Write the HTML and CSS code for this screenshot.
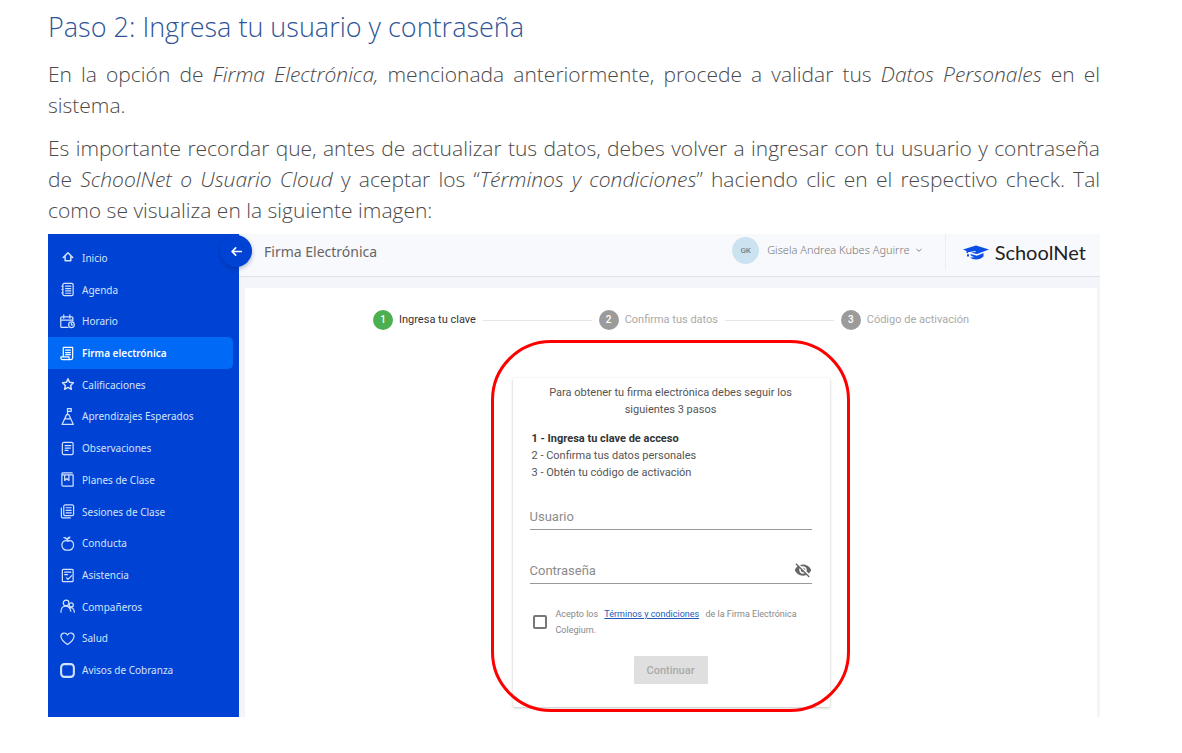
FILE: index.html
```html
<!DOCTYPE html>
<html lang="es">
<head>
<meta charset="utf-8">
<meta name="viewport" content="width=device-width, initial-scale=1">
<title>Paso 2: Ingresa tu usuario y contraseña</title>
<link rel="stylesheet" href="styles.css">
</head>
<body>
<article class="doc">
  <h1 class="doc-title">Paso 2: Ingresa tu usuario y contraseña</h1>
  <p class="doc-text">En la opción de <em>Firma Electrónica,</em> mencionada anteriormente, procede a validar tus <em>Datos Personales</em> en el sistema.</p>
  <p class="doc-text">Es importante recordar que, antes de actualizar tus datos, debes volver a ingresar con tu usuario y contraseña de <em>SchoolNet o Usuario Cloud</em> y aceptar los “<em>Términos y condiciones</em>” haciendo clic en el respectivo check. Tal como se visualiza en la siguiente imagen:</p>

  <div class="app">
    <aside class="sidebar">
      <button class="collapse" type="button" aria-label="Contraer menú">
        <svg class="icon" viewBox="0 0 16 16"><path d="M14 8H3M7 3.500 2.500 8 7 12.500" stroke-width="2"/></svg>
      </button>
      <nav class="nav">
        <a class="nav-item" href="#"><svg class="icon" viewBox="0 0 16 16"><path d="M3.500 8 8.500 3l5 5M5.500 7v4.500h6V7" stroke-width="1.600"/></svg>Inicio</a>
        <a class="nav-item" href="#"><svg class="icon" viewBox="0 0 16 16"><rect x="3" y="1.500" width="11" height="13" rx="1.500"/><path d="M6 4.500h5.500M6 7h5.500M6 9.500h5.500M6 12h5.500M2 4.500h1M2 8h1M2 11.500h1"/></svg>Agenda</a>
        <a class="nav-item" href="#"><svg class="icon" viewBox="0 0 16 16"><path d="M8.500 14.300H2Q.8 14.300.8 13V4Q.8 3 2 3h10.500q1.200 0 1.200 1v3.500M.8 6.500h12.700M4 1v3.500M10.500 1v3.500"/><circle cx="12.200" cy="11.500" r="3"/><path d="M12.200 10v1.700h1.200"/></svg>Horario</a>
        <a class="nav-item active" href="#" aria-current="page"><svg class="icon" viewBox="0 0 16 16"><path d="M3.500 11V1.500h10v11q0 2-2 2h-9q-1.500 0-1.500-2V11.500h8.500v1q0 2 2 2M6 4.500h5M6 7h5M6 9.200h5"/></svg>Firma electrónica</a>
        <a class="nav-item" href="#"><svg class="icon" viewBox="0 0 16 16"><path d="m8.500 2 1.700 3.700 4.100.5-3 2.800.8 4.100-3.600-2-3.600 2 .8-4.100-3-2.800 4.100-.5z" stroke-width="1.600"/></svg>Calificaciones</a>
        <a class="nav-item" href="#"><svg class="icon tall" viewBox="0 0 16 20"><path d="M8 7V1.500h4v3H8M2.200 18.500 7 8h2.500l4.700 10.500zM5.200 12.500h6"/></svg>Aprendizajes Esperados</a>
        <a class="nav-item" href="#"><svg class="icon" viewBox="0 0 16 16"><rect x="2.500" y="1.500" width="11.500" height="13" rx="1.500"/><path d="M5.500 5h6M5.500 7.500h5.500M5.500 10h3"/></svg>Observaciones</a>
        <a class="nav-item" href="#"><svg class="icon" viewBox="0 0 16 16"><path d="M2 3V13.500Q2 15 3.500 15H14V3H3Q2 3 2 2t1-1h10M5 3v6l2.200-2L9.500 9V3"/></svg>Planes de Clase</a>
        <a class="nav-item" href="#"><svg class="icon" viewBox="0 0 16 16"><rect x="4" y="1" width="10.500" height="11.500" rx="1.500"/><path d="M6.500 4h5.500M6.500 6.700h5.500M6.500 9.500h5.500M1.500 4.500v8.500q0 1.800 1.500 1.800h8"/></svg>Sesiones de Clase</a>
        <a class="nav-item" href="#"><svg class="icon" viewBox="0 0 16 16"><path d="M8.500 5.500C5 4 2 6 2 9.500S4.500 15 6.500 15h3.500c2 0 4.500-2 4.500-5.500S12 4 8.500 5.500zM8.500 5 7 2.500"/><path fill="currentColor" d="M4 1.500q2.500-.8 3.500 1.500 1-2.500 3.500-2-.5 2.500-3 2.500Q5 3.500 4 1.500z" stroke-width=".5"/></svg>Conducta</a>
        <a class="nav-item" href="#"><svg class="icon" viewBox="0 0 16 16"><rect x="2.500" y="1.500" width="11.500" height="13" rx="1"/><path d="M5 4.500h6.500M5 7h3M7 10.500l1.500 1.700 4-4"/></svg>Asistencia</a>
        <a class="nav-item" href="#"><svg class="icon" viewBox="0 0 16 16"><circle cx="6.500" cy="4.200" r="3"/><path d="M1 14c0-4.200 2-6.500 5-6.500s5 2.500 5.500 5.500"/><circle cx="12" cy="6.300" r="2.200"/><path d="M10 9.500c3-1 5 .8 5.300 4.500"/></svg>Compañeros</a>
        <a class="nav-item" href="#"><svg class="icon" viewBox="0 0 16 16"><path d="M8 14.500C3.500 11.500 1 8.800 1 5.700 1 1.800 6 .8 8 4.300c2-3.500 7-2.500 7 1.400 0 3.100-2.500 5.800-7 8.800z"/></svg>Salud</a>
        <a class="nav-item" href="#"><svg class="icon" viewBox="0 0 16 16"><rect x="1.200" y="1.200" width="13.600" height="13.600" rx="3.500" stroke-width="2.200"/></svg>Avisos de Cobranza</a>
      </nav>
    </aside>

    <div class="main">
      <header class="topbar">
        <h2 class="topbar-title">Firma Electrónica</h2>
        <button class="user" type="button">
          <span class="avatar">GK</span>
          Gisela Andrea Kubes Aguirre
          <svg class="chevron" viewBox="0 0 8 8"><path d="m1.500 3 2.500 2.300L6.500 3"/></svg>
        </button>
        <div class="brand">
          <svg class="brand-logo" viewBox="0 0 26 15"><path fill="#0b4fe8" d="M0 4.500 13 .5l13 4L14 9 8 7.800l5-1-.5-.8L5 7.200v1L3.500 8V6zM4 9.200h2v2.300H4zM7.500 9l6.500 1.700L20.500 8v3.500q-3 3-7.500 3-4 0-6-2l4.500-.2q-3-.8-4-2.300z"/></svg>
          <span>SchoolNet</span>
        </div>
      </header>

      <main class="panel">
        <ol class="steps">
          <li class="step current"><span class="dot">1</span>Ingresa tu clave</li>
          <li class="step-line" role="presentation"></li>
          <li class="step"><span class="dot">2</span>Confirma tus datos</li>
          <li class="step-line" role="presentation"></li>
          <li class="step"><span class="dot">3</span>Código de activación</li>
        </ol>

        <form class="card">
          <p class="card-intro">Para obtener tu firma electrónica debes seguir los siguientes 3 pasos</p>
          <div class="card-list">
            <strong>1 - Ingresa tu clave de acceso</strong>
            <span>2 - Confirma tus datos personales</span>
            <span>3 - Obtén tu código de activación</span>
          </div>
          <div class="fields">
            <div class="field">
              <input type="text" placeholder="Usuario" aria-label="Usuario">
            </div>
            <div class="field">
              <input type="password" placeholder="Contraseña" aria-label="Contraseña">
              <button class="eye" type="button" aria-label="Mostrar contraseña">
                <svg viewBox="0 0 24 24"><path fill="#666" d="M12 7c2.760 0 5 2.240 5 5 0 .65-.13 1.260-.36 1.830l2.920 2.920c1.510-1.260 2.700-2.890 3.430-4.750-1.730-4.390-6-7.500-11-7.500-1.400 0-2.740.25-3.980.7l2.160 2.160C10.740 7.130 11.350 7 12 7zM2 4.270l2.280 2.280.46.46C3.080 8.300 1.780 10.020 1 12c1.730 4.390 6 7.500 11 7.500 1.550 0 3.030-.3 4.380-.84l.42.42L19.730 22 21 20.730 3.270 3 2 4.270zM7.530 9.800l1.550 1.550c-.05.21-.08.43-.08.65 0 1.660 1.340 3 3 3 .22 0 .44-.03.65-.08l1.550 1.550c-.67.33-1.410.53-2.200.53-2.760 0-5-2.240-5-5 0-.79.2-1.530.53-2.200zm4.310-.78 3.150 3.150.02-.16c0-1.660-1.340-3-3-3l-.17.010z"/></svg>
              </button>
            </div>
          </div>
          <div class="terms">
            <input type="checkbox" id="accept">
            <label for="accept">Acepto los <a href="#">Términos y condiciones</a> de la Firma Electrónica Colegium.</label>
          </div>
          <button class="submit" type="submit" disabled>Continuar</button>
          <div class="highlight" aria-hidden="true"></div>
        </form>
      </main>
    </div>
  </div>
</article>
</body>
</html>
```
FILE: styles.css
```css
* {
  box-sizing: border-box;
}

body {
  margin: 0;
  background: #fff;
  font-family: Roboto, "Liberation Sans", sans-serif;
}

button,
input {
  font: inherit;
}

.doc {
  padding: 8px 82px 36px 48px;
}

.doc-title {
  margin: 0 0 13px;
  color: #2f5597;
  font: 300 27px/38px "Open Sans", sans-serif;
}

.doc-text {
  margin: 0 0 12px;
  color: #4a4a4a;
  font: 300 21px/31px "Open Sans", sans-serif;
  text-align: justify;
}

.doc-text:last-of-type {
  margin-bottom: 8px;
}

.app {
  display: flex;
  min-height: 483px;
  background: #f4f5fa;
}

/* Sidebar */
.sidebar {
  position: relative;
  display: flex;
  flex: 0 0 191px;
  padding: 8px 6px 31px 0;
  background: #0043d4;
}

.collapse {
  position: absolute;
  top: 1px;
  right: -13px;
  display: grid;
  place-items: center;
  width: 32px;
  height: 32px;
  padding: 0;
  border: 0;
  border-radius: 50%;
  background: #0043d4;
  color: #fff;
  box-shadow: 0 2px 4px rgba(0, 20, 90, 0.3);
}

.nav {
  display: flex;
  flex: 1;
  flex-direction: column;
}

.nav-item {
  display: flex;
  flex: 1;
  align-items: center;
  gap: 7px;
  padding-left: 12px;
  border-radius: 0 5px 5px 0;
  color: #d3e2fb;
  font: 400 10px/16px "Noto Sans", sans-serif;
  text-decoration: none;
}

.nav-item.active {
  background: #0069f5;
  color: #fff;
  font-weight: 600;
}

.icon {
  flex: none;
  width: 15px;
  height: 15px;
  fill: none;
  stroke: currentColor;
  stroke-width: 1.3;
  stroke-linecap: round;
  stroke-linejoin: round;
}

.icon.tall {
  height: 19px;
}

.collapse .icon {
  width: 13px;
  height: 13px;
}

/* Main area */
.main {
  display: flex;
  flex: 1;
  flex-direction: column;
  min-width: 0;
}

.topbar {
  display: flex;
  align-items: center;
  height: 43px;
  padding: 0 14px 0 25px;
  border-bottom: 1px solid #dfe1e8;
  background: #f8f9fc;
}

.topbar-title {
  flex: 1;
  margin: 0;
  padding-bottom: 6px;
  color: #666;
  font: 400 14px/20px "Noto Sans", sans-serif;
}

.user {
  display: flex;
  align-items: center;
  padding: 0 22px 10px 0;
  border: 0;
  background: none;
  color: #777;
  font: 300 11px/16px "Noto Sans", sans-serif;
}

.avatar {
  width: 27px;
  margin-right: 8px;
  border-radius: 50%;
  background: #cbe3f1;
  color: #6f8590;
  font: 500 8px/27px Roboto, sans-serif;
  text-align: center;
}

.chevron {
  width: 8px;
  height: 8px;
  margin-left: 5px;
  fill: none;
  stroke: #888;
}

.brand {
  display: flex;
  align-items: center;
  gap: 6px;
  align-self: flex-start;
  height: 36px;
  padding-left: 17px;
  border-left: 1px solid #eceef2;
  color: #222;
  font: 400 20px/24px Lato, sans-serif;
}

.brand-logo {
  width: 26px;
  height: 15px;
}

.panel {
  flex: 1;
  margin: 11px 3px 0 6px;
  padding: 22px 128px 10px;
  background: #fff;
}

.steps {
  display: flex;
  align-items: center;
  gap: 7px;
  margin: 0 0 48px;
  padding: 0;
  list-style: none;
}

.step {
  display: flex;
  align-items: center;
  gap: 6px;
  color: #aaa;
  font-size: 11px;
  line-height: 20px;
  white-space: nowrap;
}

.step.current {
  color: #333;
}

.dot {
  width: 20px;
  border-radius: 50%;
  background: #9b9b9b;
  color: #fff;
  font-size: 10px;
  font-weight: 500;
  text-align: center;
}

.current .dot {
  background: #4caf50;
}

.step-line {
  flex: 1;
  height: 1px;
  background: #e6e6e6;
}

/* Login card */
.card {
  position: relative;
  display: flex;
  flex-direction: column;
  width: 317px;
  margin: 0 auto;
  padding: 6px 18px 23px 17px;
  border-radius: 2px;
  background: #fff;
  box-shadow: 0 1px 3px rgba(0, 0, 0, 0.24);
  color: #555;
  font-size: 11px;
  line-height: 17px;
}

.card-intro {
  margin: 0 0 12px;
  padding: 0 16px;
  text-align: center;
}

.card-list {
  display: flex;
  flex-direction: column;
  margin-bottom: 22px;
  padding-left: 2px;
}

.card-list strong {
  color: #333;
}

.fields {
  display: grid;
  gap: 27px;
  margin-bottom: 22px;
}

.field {
  display: flex;
  align-items: center;
  height: 27px;
  border-bottom: 1px solid #999;
}

.field input {
  flex: 1;
  min-width: 0;
  padding: 0;
  border: 0;
  outline: 0;
  background: none;
  font-size: 13px;
}

.field input::placeholder {
  color: #8c8c8c;
}

.eye {
  width: 18px;
  height: 18px;
  padding: 0;
  border: 0;
  background: none;
}

.eye svg {
  display: block;
}

.terms {
  display: flex;
  align-items: center;
  gap: 9px;
  margin-bottom: 18px;
  padding-left: 3px;
  color: #888;
  font-size: 9px;
  line-height: 16px;
}

.terms input {
  flex: none;
  width: 14px;
  height: 14px;
  margin: 0;
  border: 2px solid #777;
  border-radius: 2px;
  appearance: none;
}

.terms a {
  margin: 0 4px;
  color: #2458b8;
}

.submit {
  align-self: center;
  width: 74px;
  height: 28px;
  padding: 0;
  border: 0;
  border-radius: 1px;
  background: #dfdfdf;
  color: #aaa;
  font-size: 11px;
  font-weight: 500;
}

.highlight {
  position: absolute;
  inset: -38px -20px -5px -22px;
  border: 3px solid #f00;
  border-radius: 60px;
  pointer-events: none;
}
```
